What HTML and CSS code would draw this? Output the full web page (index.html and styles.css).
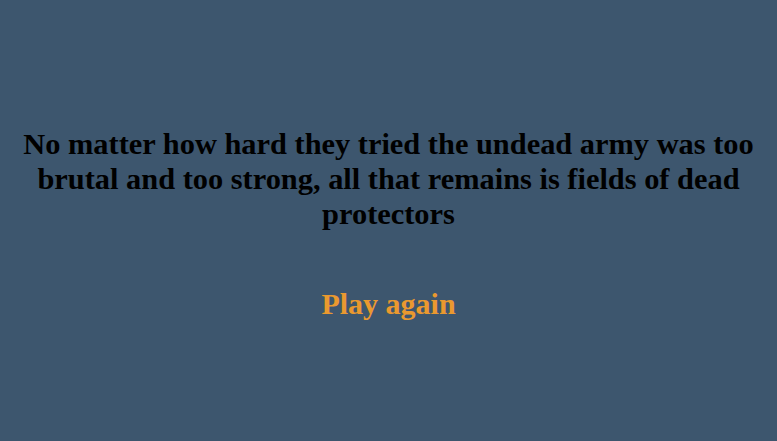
FILE: index.html
```html
<!DOCTYPE html>
<html>
<head>
<meta charset="utf-8">
<link rel="stylesheet" href="styles.css">
</head>
<body>
<main class="screen">
  <h1 class="message">No matter how hard they tried the undead army was too brutal and too strong, all that remains is fields of dead protectors</h1>
  <a class="again" href="#">Play again</a>
</main>
</body>
</html>
```
FILE: styles.css
```css
html, body {
  margin: 0;
  height: 100%;
  background: #3d566e;
}
body {
  font-family: "Liberation Serif", "Times New Roman", serif;
}
.screen {
  height: 100%;
  display: flex;
  flex-direction: column;
  align-items: center;
  justify-content: center;
  padding: 7px 8px 0;
  box-sizing: border-box;
}
.message {
  margin: 0;
  font-size: 30.4px;
  line-height: 35px;
  font-weight: bold;
  color: #000;
  text-align: center;
}
.again {
  margin-top: 55px;
  font-size: 30px;
  font-weight: bold;
  color: #ea992f;
  text-decoration: none;
}
```
